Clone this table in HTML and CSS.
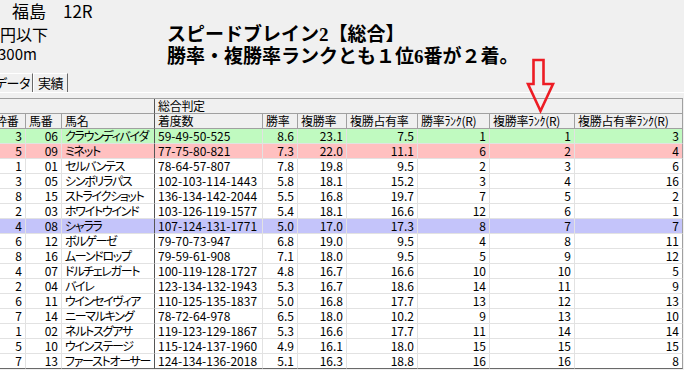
FILE: index.html
```html
<!DOCTYPE html>
<html lang="ja">
<head>
<meta charset="utf-8">
<title>スピードブレイン2【総合】</title>
<link rel="stylesheet" href="styles.css">
</head>
<body>
<div class="page">
  <header class="top">
    <div class="race">
      <div class="place">福島　12R</div>
      <div class="cond">円以下</div>
      <div class="dist">300m</div>
    </div>
    <div class="title">
      <div>スピードブレイン2【総合】</div>
      <div>勝率・複勝率ランクとも１位6番が２着。</div>
    </div>
  </header>

  <nav class="tabs">
    <div class="tab tab-data">データ</div>
    <div class="tab tab-result">実績</div>
  </nav>

  <section class="panel">
    <div class="grid">
      <div class="row head">
        <div class="cell span3 divider"></div>
        <div class="cell span7 last">総合判定</div>
      </div>
      <div class="row head">
        <div class="cell">枠番</div>
        <div class="cell">馬番</div>
        <div class="cell divider">馬名</div>
        <div class="cell">着度数</div>
        <div class="cell">勝率</div>
        <div class="cell">複勝率</div>
        <div class="cell">複勝占有率</div>
        <div class="cell">勝率ﾗﾝｸ(R)</div>
        <div class="cell">複勝率ﾗﾝｸ(R)</div>
        <div class="cell last">複勝占有率ﾗﾝｸ(R)</div>
      </div>

      <div class="row green">
        <div class="cell num">3</div><div class="cell num">06</div><div class="cell name divider">クラウンディバイダ</div><div class="cell">59-49-50-525</div><div class="cell num">8.6</div><div class="cell num">23.1</div><div class="cell num">7.5</div><div class="cell num">1</div><div class="cell num">1</div><div class="cell num last">3</div>
      </div>
      <div class="row pink">
        <div class="cell num">5</div><div class="cell num">09</div><div class="cell name divider">ミネット</div><div class="cell">77-75-80-821</div><div class="cell num">7.3</div><div class="cell num">22.0</div><div class="cell num">11.1</div><div class="cell num">6</div><div class="cell num">2</div><div class="cell num last">4</div>
      </div>
      <div class="row">
        <div class="cell num">1</div><div class="cell num">01</div><div class="cell name divider">セルバンテス</div><div class="cell">78-64-57-807</div><div class="cell num">7.8</div><div class="cell num">19.8</div><div class="cell num">9.5</div><div class="cell num">2</div><div class="cell num">3</div><div class="cell num last">6</div>
      </div>
      <div class="row">
        <div class="cell num">3</div><div class="cell num">05</div><div class="cell name divider">シンボリラパス</div><div class="cell">102-103-114-1443</div><div class="cell num">5.8</div><div class="cell num">18.1</div><div class="cell num">15.2</div><div class="cell num">3</div><div class="cell num">4</div><div class="cell num last">16</div>
      </div>
      <div class="row">
        <div class="cell num">8</div><div class="cell num">15</div><div class="cell name divider">ストライクショット</div><div class="cell">136-134-142-2044</div><div class="cell num">5.5</div><div class="cell num">16.8</div><div class="cell num">19.7</div><div class="cell num">7</div><div class="cell num">5</div><div class="cell num last">2</div>
      </div>
      <div class="row">
        <div class="cell num">2</div><div class="cell num">03</div><div class="cell name divider">ホワイトウインド</div><div class="cell">103-126-119-1577</div><div class="cell num">5.4</div><div class="cell num">18.1</div><div class="cell num">16.6</div><div class="cell num">12</div><div class="cell num">6</div><div class="cell num last">1</div>
      </div>
      <div class="row blue">
        <div class="cell num">4</div><div class="cell num">08</div><div class="cell name divider">シャララ</div><div class="cell">107-124-131-1771</div><div class="cell num">5.0</div><div class="cell num">17.0</div><div class="cell num">17.3</div><div class="cell num">8</div><div class="cell num">7</div><div class="cell num last">7</div>
      </div>
      <div class="row">
        <div class="cell num">6</div><div class="cell num">12</div><div class="cell name divider">ボルゲーゼ</div><div class="cell">79-70-73-947</div><div class="cell num">6.8</div><div class="cell num">19.0</div><div class="cell num">9.5</div><div class="cell num">4</div><div class="cell num">8</div><div class="cell num last">11</div>
      </div>
      <div class="row">
        <div class="cell num">8</div><div class="cell num">16</div><div class="cell name divider">ムーンドロップ</div><div class="cell">79-59-61-908</div><div class="cell num">7.1</div><div class="cell num">18.0</div><div class="cell num">9.5</div><div class="cell num">5</div><div class="cell num">9</div><div class="cell num last">12</div>
      </div>
      <div class="row">
        <div class="cell num">4</div><div class="cell num">07</div><div class="cell name divider">ドルチェレガート</div><div class="cell">100-119-128-1727</div><div class="cell num">4.8</div><div class="cell num">16.7</div><div class="cell num">16.6</div><div class="cell num">10</div><div class="cell num">10</div><div class="cell num last">5</div>
      </div>
      <div class="row">
        <div class="cell num">2</div><div class="cell num">04</div><div class="cell name divider">バイレ</div><div class="cell">123-134-132-1943</div><div class="cell num">5.3</div><div class="cell num">16.7</div><div class="cell num">18.6</div><div class="cell num">14</div><div class="cell num">11</div><div class="cell num last">9</div>
      </div>
      <div class="row">
        <div class="cell num">6</div><div class="cell num">11</div><div class="cell name divider">ウインセイヴィア</div><div class="cell">110-125-135-1837</div><div class="cell num">5.0</div><div class="cell num">16.8</div><div class="cell num">17.7</div><div class="cell num">13</div><div class="cell num">12</div><div class="cell num last">13</div>
      </div>
      <div class="row">
        <div class="cell num">7</div><div class="cell num">14</div><div class="cell name divider">ニーマルキング</div><div class="cell">78-72-64-978</div><div class="cell num">6.5</div><div class="cell num">18.0</div><div class="cell num">10.2</div><div class="cell num">9</div><div class="cell num">13</div><div class="cell num last">10</div>
      </div>
      <div class="row">
        <div class="cell num">1</div><div class="cell num">02</div><div class="cell name divider">ネルトスグアサ</div><div class="cell">119-123-129-1867</div><div class="cell num">5.3</div><div class="cell num">16.6</div><div class="cell num">17.7</div><div class="cell num">11</div><div class="cell num">14</div><div class="cell num last">14</div>
      </div>
      <div class="row">
        <div class="cell num">5</div><div class="cell num">10</div><div class="cell name divider">ウインステージ</div><div class="cell">115-124-137-1960</div><div class="cell num">4.9</div><div class="cell num">16.1</div><div class="cell num">18.0</div><div class="cell num">15</div><div class="cell num">15</div><div class="cell num last">15</div>
      </div>
      <div class="row bottom">
        <div class="cell num">7</div><div class="cell num">13</div><div class="cell name divider">ファーストオーサー</div><div class="cell">124-134-136-2018</div><div class="cell num">5.1</div><div class="cell num">16.3</div><div class="cell num">18.8</div><div class="cell num">16</div><div class="cell num">16</div><div class="cell num last">8</div>
      </div>
    </div>
  </section>

  <svg class="arrow" width="34" height="60" viewBox="0 0 34 60" aria-hidden="true">
    <path d="M9.5 4 H19.5 V28 H29 L16.5 55 L4 28 H9.5 Z" fill="none" stroke="#ed1c24" stroke-width="2.6" stroke-linejoin="miter"/>
  </svg>
</div>
</body>
</html>
```

FILE: styles.css
```css
* {
  box-sizing: border-box;
}

html,
body {
  margin: 0;
  padding: 0;
}

body {
  background: #f0f0f0;
  color: #000;
  font-family: "Noto Sans CJK JP", sans-serif;
}

.page {
  position: relative;
  width: 684px;
  height: 370px;
  overflow: hidden;
}

/* ---------- top area ---------- */
.top {
  display: flex;
  height: 72px;
}

.race {
  flex: none;
  width: 167px;
}

.place {
  font-size: 17px;
  line-height: 20px;
  padding: 1px 0 0 12px;
}

.cond {
  font-size: 16px;
  line-height: 20px;
  margin-top: 3px;
}

.dist {
  font-size: 15px;
  line-height: 16px;
  margin-top: 2px;
  margin-left: -2px;
}

.title {
  padding-top: 24px;
  font-family: "Liberation Serif", "Noto Sans CJK JP", serif;
  font-weight: bold;
  font-size: 19px;
  line-height: 22px;
  white-space: nowrap;
}

/* ---------- tabs ---------- */
.tabs {
  display: flex;
  align-items: flex-end;
  height: 20px;
}

.tab {
  height: 19px;
  font-size: 13px;
  line-height: 17px;
  padding: 0 3px;
  border-left: 1px solid #fff;
  border-top: 1px solid #fff;
  border-right: 1px solid #696969;
  font-feature-settings: "palt";
  letter-spacing: -0.5px;
  white-space: nowrap;
  overflow: hidden;
}

.tab-data {
  width: 42px;
  margin-left: -9px;
}

.tab-result {
  width: 35px;
  padding-left: 4px;
}

/* ---------- panel / grid ---------- */
.panel {
  border-top: 1px solid #fff;
  padding-top: 5px;
}

.grid {
  width: 691px;
  margin-left: -8px;
  border-top: 1px solid #a0a0a0;
}

.row {
  display: grid;
  grid-template-columns: 34px 36px 93px 108px 35px 49px 71px 72px 85px 108px;
  height: 15px;
  background: #fff;
}

.row.green {
  background: #c0fac0;
}

.row.pink {
  background: #ffc0c0;
}

.row.blue {
  background: #c4c4fa;
}

.cell {
  height: 15px;
  padding: 0 3px;
  border-right: 1px solid #e2e2e2;
  border-bottom: 1px solid #e2e2e2;
  font-family: "Noto Sans CJK JP", sans-serif;
  font-size: 12px;
  line-height: 13px;
  white-space: nowrap;
  overflow: hidden;
  font-feature-settings: "palt";
}

.num {
  text-align: right;
}

.name {
  letter-spacing: -1.3px;
}

.span3 {
  grid-column: span 3;
}

.span7 {
  grid-column: span 7;
}

.head {
  background: #f0f0f0;
}

.head .cell {
  border-right-color: #a0a0a0;
  border-bottom-color: #a0a0a0;
  letter-spacing: -0.3px;
}

.row .divider {
  border-right-color: #555;
}

.row .last {
  border-right-color: #a0a0a0;
}

.row.bottom .cell {
  border-bottom-color: #696969;
}

/* ---------- overlay arrow ---------- */
.arrow {
  position: absolute;
  left: 524px;
  top: 56px;
}
```
